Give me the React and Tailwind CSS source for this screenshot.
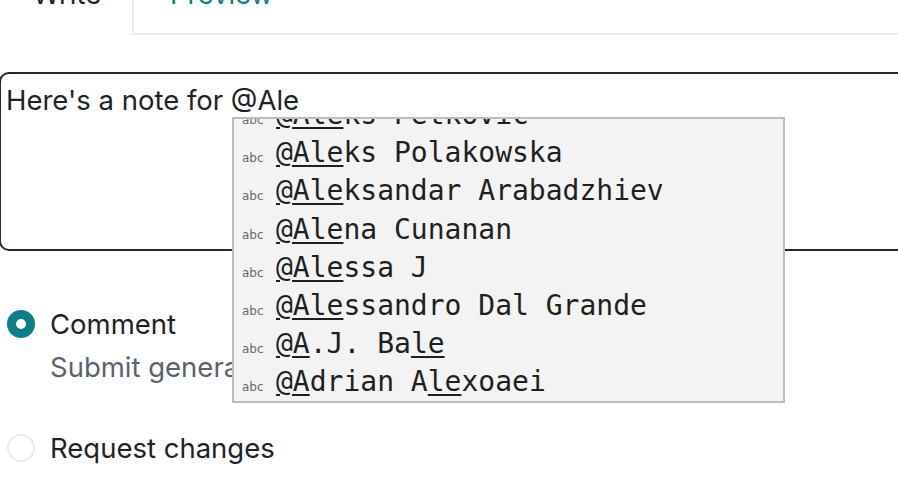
import React from "react";

const rows = [
  { parts: [["@Ale", true], ["ks Petkovic", false]] },
  { parts: [["@Ale", true], ["ks Polakowska", false]] },
  { parts: [["@Ale", true], ["ksandar Arabadzhiev", false]] },
  { parts: [["@Ale", true], ["na Cunanan", false]] },
  { parts: [["@Ale", true], ["ssa J", false]] },
  { parts: [["@Ale", true], ["ssandro Dal Grande", false]] },
  { parts: [["@A", true], [".J. Ba", false], ["le", true]] },
  { parts: [["@A", true], ["drian A", false], ["le", true], ["xoaei", false]] },
];

export default function App() {
  return (
    <div
      className="relative w-[898px] h-[478px] overflow-hidden bg-white text-[#1f2328]"
      style={{ fontFamily: "Inter, 'Noto Sans', sans-serif" }}
    >
      {/* Tabs */}
      <div className="flex h-[35px]">
        <div className="w-[134px] border-r-2 border-[#ebecf0] flex justify-center">
          <span className="text-[27.5px] leading-[36px] -mt-[24px] pl-[2px]">Write</span>
        </div>
        <div className="flex-1 border-b-2 border-[#ebecf0] pl-[36px]">
          <span className="block text-[27.5px] leading-[36px] -mt-[24px] text-[#0e7f86]">Preview</span>
        </div>
      </div>

      {/* Textarea */}
      <div className="mt-[37px] -ml-[1px] w-[930px] h-[179px] border-2 border-[#24292f] rounded-[10px] pl-[5px] pt-[6px]">
        <div className="text-[27.5px] leading-[40px]">Here's a note for @Ale</div>
      </div>

      {/* Radios */}
      <div className="mt-[53px] flex flex-col">
        <div className="flex items-center h-[40px]">
          <span className="ml-[7px] w-[28px] h-[28px] rounded-full border-[9px] border-[#0e7f86] bg-white" />
          <span className="ml-[15px] text-[27.5px] leading-[40px]">Comment</span>
        </div>
        <div className="ml-[50px] mt-[3px] text-[27.5px] leading-[40px] text-[#59636e] whitespace-nowrap">
          Submit general feedback without explicit approval.
        </div>
        <div className="flex items-center h-[40px] mt-[41px]">
          <span className="ml-[7px] w-[28px] h-[28px] rounded-full border-2 border-[#ebecf0] bg-white" />
          <span className="ml-[15px] text-[27.5px] leading-[40px]">Request changes</span>
        </div>
      </div>

      {/* Autocomplete popup */}
      <div className="absolute left-[232px] top-[117px] w-[553px] h-[286px] border-2 border-[#bdbdbd] bg-[#f3f3f3] overflow-hidden">
        <div className="-mt-[23px]">
          {rows.map((r, i) => (
            <div key={i} className="flex items-baseline h-[38.2px] pl-[8px] whitespace-nowrap">
              <span
                className="w-[34px] shrink-0 text-[12px] text-[#6a6a6a]"
                style={{ fontFamily: "'DejaVu Sans', sans-serif" }}
              >
                abc
              </span>
              <span
                className="text-[28px] leading-[38px] text-[#1f1f1f]"
                style={{ fontFamily: "'DejaVu Sans Mono', monospace" }}
              >
                {r.parts.map(([t, u], j) =>
                  u ? (
                    <span key={j} className="underline decoration-2 underline-offset-[3px]">
                      {t}
                    </span>
                  ) : (
                    <span key={j}>{t}</span>
                  )
                )}
              </span>
            </div>
          ))}
        </div>
      </div>
    </div>
  );
}
